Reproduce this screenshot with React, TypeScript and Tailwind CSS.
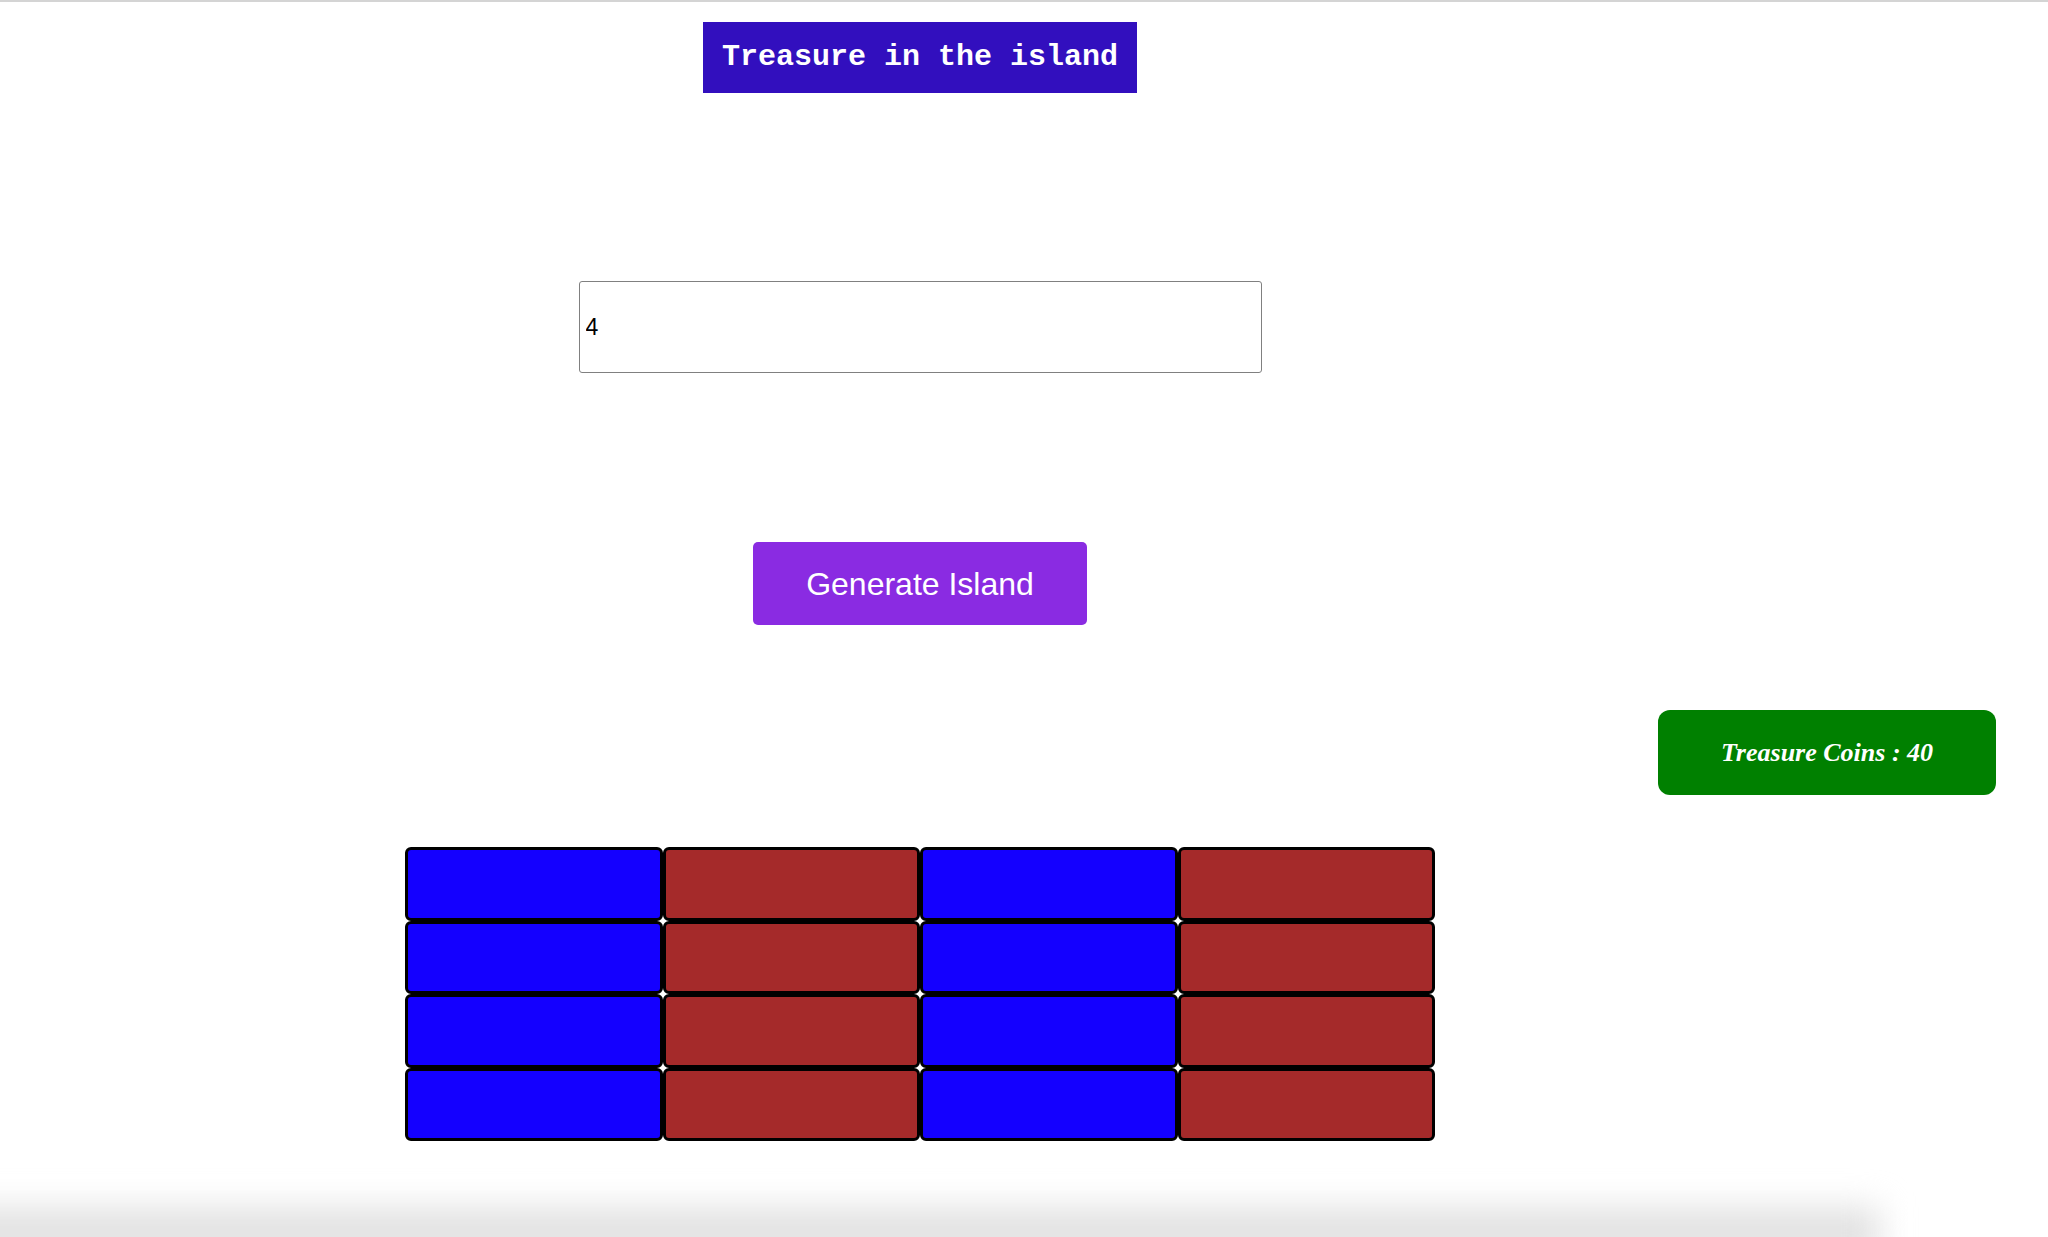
import { useState } from "react";

const cells = Array.from({ length: 16 }, (_, i) => (i % 2 === 0 ? "blue" : "brown"));

const App = () => {
    const [size, setSize] = useState("4");
    const coins = 40;

    return (
        <div className="relative h-[1237px] overflow-hidden bg-white border-t-2 border-[#d4d4d4]">
            <div className="w-[1840px] flex flex-col items-center">
                {/* Title */}
                <h1 className="mt-[20px] h-[71px] w-[434px] flex items-center justify-center bg-[#320fbe] text-white text-[30px] font-bold font-['Liberation_Mono','Courier_New',monospace] whitespace-pre">
                    Treasure in the island
                </h1>

                <input
                    type="text"
                    value={size}
                    onChange={(e) => setSize(e.target.value)}
                    className="mt-[188px] h-[92px] w-[683px] border-[1.5px] border-[#808080] rounded-[3px] px-[6px] text-[23px] text-black font-['Liberation_Sans',Arial,sans-serif] outline-none"
                />

                <button className="mt-[169px] h-[83px] w-[334px] rounded-[5px] bg-[#8a2be2] text-white text-[32px] font-['Liberation_Sans',Arial,sans-serif]">
                    Generate Island
                </button>
            </div>

            {/* Score */}
            <div className="mt-[85px] flex justify-end pr-[52px]">
                <div className="h-[85px] w-[338px] rounded-[12px] bg-[#008000] flex items-center justify-center text-white text-[26px] italic font-bold font-['Liberation_Serif','Times_New_Roman',serif]">
                    Treasure Coins : {coins}
                </div>
            </div>

            {/* Island grid */}
            <div className="mt-[52px] w-[1840px] flex justify-center">
                <div className="grid grid-cols-[repeat(4,257.5px)] grid-rows-[repeat(4,73.5px)]">
                    {cells.map((c, i) => (
                        <div
                            key={i}
                            className={
                                c === "blue"
                                    ? "border-[3px] border-black rounded-[6px] bg-[#1400ff]"
                                    : "border-[3px] border-black rounded-[6px] bg-[#a52a2a]"
                            }
                        />
                    ))}
                </div>
            </div>

            {/* bottom fade */}
            <div className="pointer-events-none absolute bottom-[-22px] left-[-40px] h-[52px] w-[1920px] bg-[#e2e2e2] blur-[16px]"></div>
        </div>
    );
};

export default App;
